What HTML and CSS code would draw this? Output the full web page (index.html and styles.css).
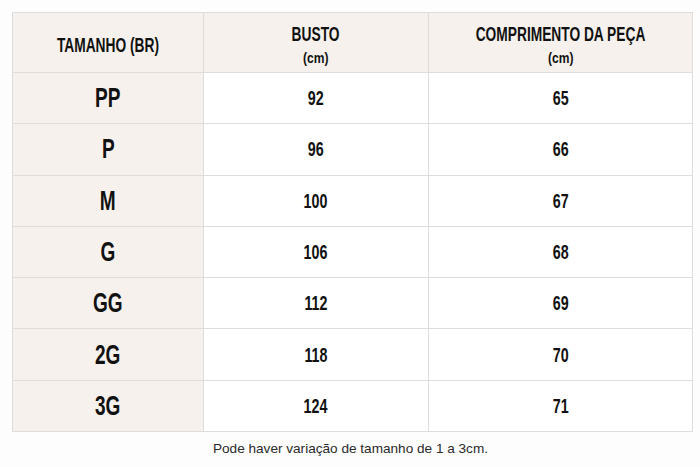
FILE: index.html
```html
<!DOCTYPE html>
<html lang="pt-BR">
<head>
<meta charset="utf-8">
<title>Tabela de medidas</title>
<link rel="stylesheet" href="styles.css">
</head>
<body>
<main class="page">
  <table class="sizes">
    <thead>
      <tr>
        <th class="col-size"><span class="h-main"><span class="cond">TAMANHO (BR)</span></span></th>
        <th class="col-bust"><span class="h-main"><span class="cond">BUSTO</span></span><span class="h-unit"><span class="cond-u">(cm)</span></span></th>
        <th class="col-len"><span class="h-main"><span class="cond">COMPRIMENTO DA PEÇA</span></span><span class="h-unit"><span class="cond-u">(cm)</span></span></th>
      </tr>
    </thead>
    <tbody>
      <tr><td class="size"><span class="cond">PP</span></td><td><span class="cond">92</span></td><td><span class="cond">65</span></td></tr>
      <tr><td class="size"><span class="cond">P</span></td><td><span class="cond">96</span></td><td><span class="cond">66</span></td></tr>
      <tr><td class="size"><span class="cond">M</span></td><td><span class="cond">100</span></td><td><span class="cond">67</span></td></tr>
      <tr><td class="size"><span class="cond">G</span></td><td><span class="cond">106</span></td><td><span class="cond">68</span></td></tr>
      <tr><td class="size"><span class="cond">GG</span></td><td><span class="cond">112</span></td><td><span class="cond">69</span></td></tr>
      <tr><td class="size"><span class="cond">2G</span></td><td><span class="cond">118</span></td><td><span class="cond">70</span></td></tr>
      <tr><td class="size"><span class="cond">3G</span></td><td><span class="cond">124</span></td><td><span class="cond">71</span></td></tr>
    </tbody>
  </table>
  <p class="note">Pode haver variação de tamanho de 1 a 3cm.</p>
</main>
</body>
</html>
```
FILE: styles.css
```css
html, body {
  margin: 0;
  padding: 0;
  background: #fdfdfd;
}
.page {
  padding: 12px 11px 0 12px;
  display: flex;
  flex-direction: column;
  align-items: flex-start;
}
.sizes {
  width: 677px;
  border-collapse: collapse;
  table-layout: fixed;
  font-family: "Liberation Sans", Arial, sans-serif;
  font-weight: bold;
  color: #111111;
}
.sizes th, .sizes td {
  border: 1px solid #dddddd;
  text-align: center;
  vertical-align: middle;
  padding: 0;
}
.cond {
  display: inline-block;
  white-space: nowrap;
  transform: scaleX(0.68);
  transform-origin: center;
}
.cond-u {
  display: inline-block;
  white-space: nowrap;
  transform: scaleX(0.86);
  transform-origin: center;
}
.col-size { width: 190px; }
.col-bust { width: 224px; }
.col-len { width: 263px; }
.sizes thead tr { height: 60px; }
.sizes thead th {
  background: #f6f1ec;
  padding-top: 4px;
}
.h-main {
  display: block;
  font-size: 21px;
  line-height: 22px;
}
.h-main .cond { transform: scaleX(0.655); }
.h-unit {
  display: block;
  margin-top: 5px;
  font-size: 14px;
  line-height: 17px;
}
.sizes tbody tr { height: 51.3px; }
.sizes td {
  font-size: 21px;
  background: #ffffff;
}
.sizes td.size {
  font-size: 28px;
  background: #f6f1ec;
}
.note {
  align-self: stretch;
  margin: 9px 0 0;
  text-align: center;
  font-family: "Liberation Sans", Arial, sans-serif;
  font-size: 13.6px;
  color: #2a2a2a;
}
```
